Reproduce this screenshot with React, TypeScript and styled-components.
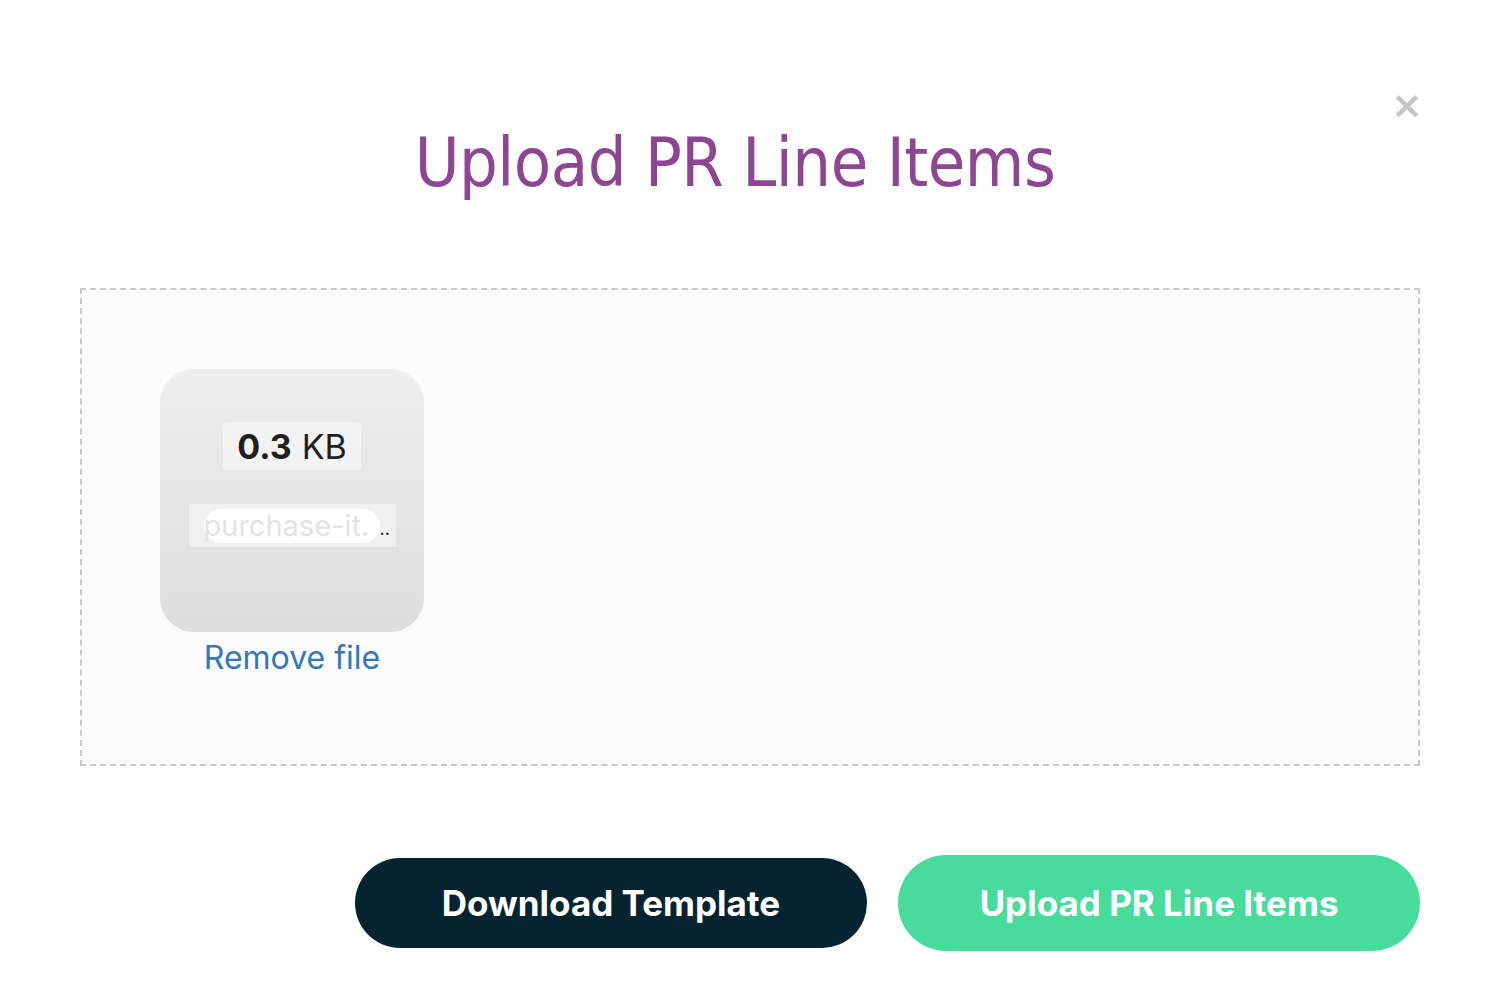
import * as React from "react";
import styled, { createGlobalStyle } from "styled-components";

const GlobalStyle = createGlobalStyle`
  html, body {
    margin: 0;
    padding: 0;
    background: #ffffff;
  }
  body {
    font-family: "Inter", "Liberation Sans", sans-serif;
  }
`;

const Modal = styled.div`
  position: relative;
  width: 1487px;
  height: 1002px;
  box-sizing: border-box;
  padding: 118px 67px 0 80px;
  display: flex;
  flex-direction: column;
  background: #ffffff;
`;

const CloseButton = styled.button`
  position: absolute;
  top: 88px;
  right: 66px;
  width: 30px;
  height: 34px;
  padding: 0;
  border: none;
  background: none;
  color: #c4c4c4;
  font-family: "DejaVu Sans", sans-serif;
  font-weight: bold;
  font-size: 38px;
  line-height: 34px;
  cursor: pointer;
`;

const Title = styled.h1`
  margin: 0 0 0 -30px;
  text-align: center;
  font-family: "DejaVu Sans Condensed", "Liberation Sans", sans-serif;
  font-weight: 400;
  font-size: 68px;
  line-height: 90px;
  letter-spacing: -0.5px;
  color: #8e4593;
`;

const DropZone = styled.div`
  margin-top: 80px;
  height: 478px;
  box-sizing: border-box;
  border: 2px dashed #c9c9c9;
  background: #fbfbfb;
  padding: 79px 78px;
  display: flex;
  align-items: flex-start;
`;

const Preview = styled.div`
  display: flex;
  flex-direction: column;
  align-items: center;
  width: 264px;
`;

const FileCard = styled.div`
  width: 264px;
  height: 263px;
  border-radius: 34px;
  background: linear-gradient(to bottom, #eeeeee, #dddddd);
  display: flex;
  flex-direction: column;
  align-items: center;
  padding-top: 53px;
  box-sizing: border-box;
`;

const SizeTag = styled.div`
  background: rgba(255, 255, 255, 0.45);
  border-radius: 4px;
  padding: 0 14px;
  height: 48px;
  display: flex;
  align-items: center;
  font-family: "Inter", "Liberation Sans", sans-serif;
  font-size: 34px;
  color: #1f1f1f;

  strong {
    font-weight: 700;
    margin-right: 10px;
  }
`;

const NameTag = styled.div`
  margin-top: 34px;
  width: 207px;
  height: 43px;
  background: rgba(255, 255, 255, 0.45);
  display: flex;
  align-items: center;
  padding: 0 0 0 15px;
  box-sizing: border-box;
  font-family: "Inter", "Liberation Sans", sans-serif;
  font-size: 29px;
  color: #111;
`;

const NameText = styled.span`
  display: block;
  width: 176px;
  height: 34px;
  line-height: 34px;
  border-radius: 17px;
  background: #ffffff;
  color: #e3e3e3;
  white-space: nowrap;
`;

const Dots = styled.span`
  font-size: 18px;
  line-height: 34px;
  padding-top: 6px;
  color: #111;
`;

const RemoveLink = styled.a`
  margin-top: 8px;
  font-family: "Inter", "Liberation Sans", sans-serif;
  font-size: 32px;
  line-height: 36px;
  color: #3478b8;
  text-decoration: none;
  cursor: pointer;
`;

const Actions = styled.div`
  margin-top: 89px;
  display: flex;
  justify-content: flex-end;
  align-items: center;
  gap: 31px;
`;

const ActionButton = styled.button<{ $primary?: boolean }>`
  border: none;
  border-radius: 48px;
  width: ${(p) => (p.$primary ? "522px" : "512px")};
  height: ${(p) => (p.$primary ? "96px" : "90px")};
  background: ${(p) => (p.$primary ? "#48dc9c" : "#062330")};
  color: #ffffff;
  font-family: "Inter", "Liberation Sans", sans-serif;
  font-weight: 700;
  font-size: 35px;
  letter-spacing: 0;
  cursor: pointer;
`;

export default function App(): React.ReactElement {
  return (
    <>
      <GlobalStyle />
      <Modal>
        <CloseButton aria-label="Close">×</CloseButton>
        <Title>Upload PR Line Items</Title>
        <DropZone>
          <Preview>
            <FileCard>
              <SizeTag>
                <strong>0.3</strong>KB
              </SizeTag>
              <NameTag>
                <NameText>purchase-it.</NameText>
                <Dots>..</Dots>
              </NameTag>
            </FileCard>
            <RemoveLink>Remove file</RemoveLink>
          </Preview>
        </DropZone>
        <Actions>
          <ActionButton>Download Template</ActionButton>
          <ActionButton $primary>Upload PR Line Items</ActionButton>
        </Actions>
      </Modal>
    </>
  );
}
